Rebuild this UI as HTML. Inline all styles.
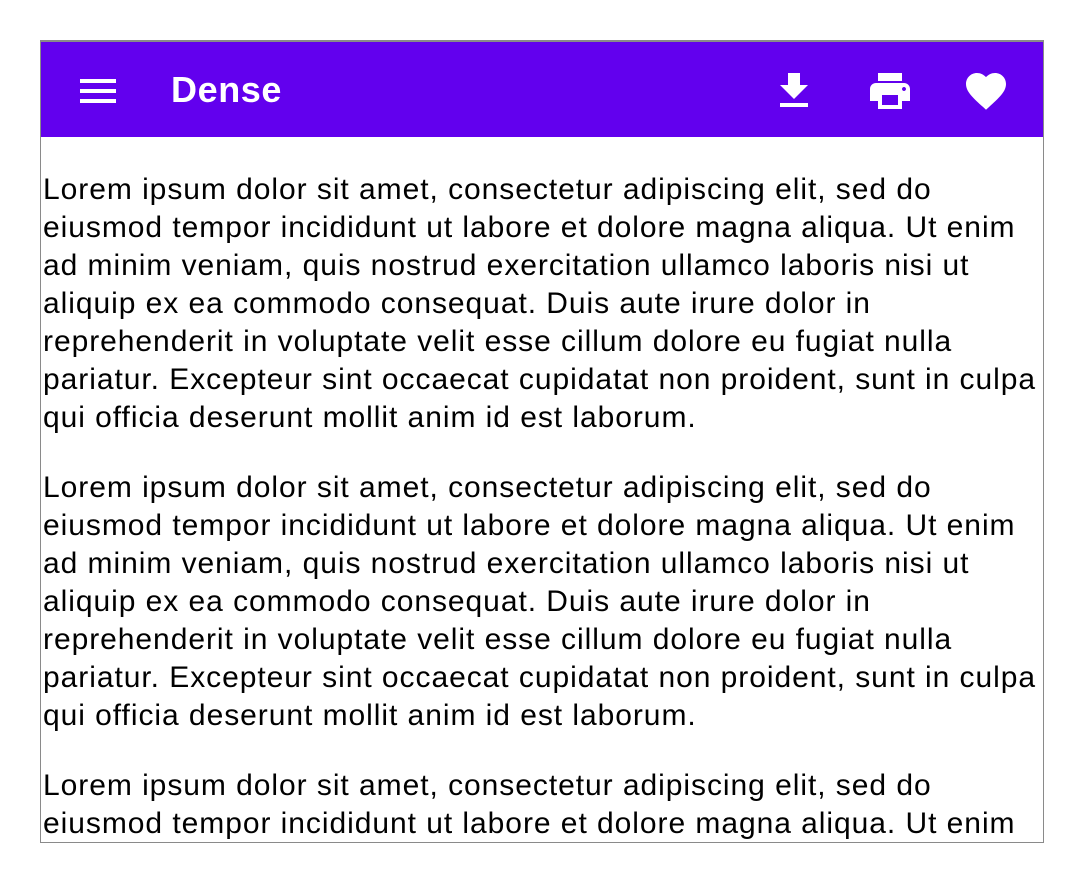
<!DOCTYPE html>
<html><head><meta charset="utf-8"><style>
html,body{margin:0;padding:0;background:#fff;}
.box{position:absolute;left:40px;top:40px;width:1002px;height:801px;border:1px solid #8a8a8a;overflow:hidden;}
.bar{position:absolute;left:0;top:0;width:1002px;height:96px;background:#6200ee;border-top:1px solid #8a8a8a;box-sizing:border-box;}
.title{position:absolute;left:130px;top:28px;font:bold 36px/40px "Liberation Sans",sans-serif;color:#fff;letter-spacing:0.6px;}
svg{position:absolute;fill:#fff;}
.content{position:absolute;left:2px;top:97px;width:1000px;}
p{margin:32px 0 32px;font:30px/38px "Liberation Sans",sans-serif;color:#000;white-space:nowrap;letter-spacing:0.95px;}
p:first-child{margin-top:33px;}
</style></head><body>
<div class="box">
<div class="bar">
<svg style="left:33px;top:25px" width="48" height="48" viewBox="0 0 24 24"><path d="M3 18h18v-2H3v2zm0-5h18v-2H3v2zm0-7v2h18V6H3z"/></svg>
<div class="title">Dense</div>
<svg style="left:729px;top:25px" width="48" height="48" viewBox="0 0 24 24"><path d="M19 9h-4V3H9v6H5l7 7 7-7zM5 18v2h14v-2H5z"/></svg>
<svg style="left:825px;top:25px" width="48" height="48" viewBox="0 0 24 24"><path d="M19 8H5c-1.66 0-3 1.34-3 3v6h4v4h12v-4h4v-6c0-1.66-1.34-3-3-3zm-3 11H8v-5h8v5zm3-7c-.55 0-1-.45-1-1s.45-1 1-1 1 .45 1 1-.45 1-1 1zm-1-9H6v4h12V3z"/></svg>
<svg style="left:921px;top:25px" width="48" height="48" viewBox="0 0 24 24"><path d="M12 21.35l-1.45-1.32C5.4 15.36 2 12.28 2 8.5 2 5.42 4.42 3 7.5 3c1.74 0 3.41.81 4.5 2.09C13.09 3.81 14.76 3 16.5 3 19.58 3 22 5.42 22 8.5c0 3.78-3.4 6.86-8.55 11.54L12 21.35z"/></svg>
</div>
<div class="content">
<p>Lorem ipsum dolor sit amet, consectetur adipiscing elit, sed do<br>eiusmod tempor incididunt ut labore et dolore magna aliqua. Ut enim<br>ad minim veniam, quis nostrud exercitation ullamco laboris nisi ut<br>aliquip ex ea commodo consequat. Duis aute irure dolor in<br>reprehenderit in voluptate velit esse cillum dolore eu fugiat nulla<br>pariatur. Excepteur sint occaecat cupidatat non proident, sunt in culpa<br>qui officia deserunt mollit anim id est laborum.</p>
<p>Lorem ipsum dolor sit amet, consectetur adipiscing elit, sed do<br>eiusmod tempor incididunt ut labore et dolore magna aliqua. Ut enim<br>ad minim veniam, quis nostrud exercitation ullamco laboris nisi ut<br>aliquip ex ea commodo consequat. Duis aute irure dolor in<br>reprehenderit in voluptate velit esse cillum dolore eu fugiat nulla<br>pariatur. Excepteur sint occaecat cupidatat non proident, sunt in culpa<br>qui officia deserunt mollit anim id est laborum.</p>
<p>Lorem ipsum dolor sit amet, consectetur adipiscing elit, sed do<br>eiusmod tempor incididunt ut labore et dolore magna aliqua. Ut enim<br>ad minim veniam, quis nostrud exercitation ullamco laboris nisi ut</p>
</div>
</div>
</body></html>
